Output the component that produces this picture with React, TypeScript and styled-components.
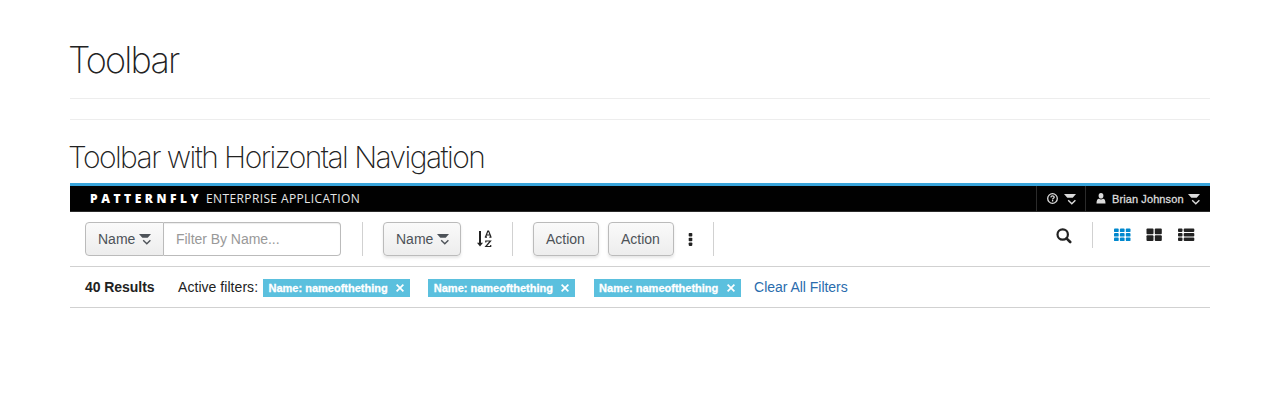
import React from 'react';
import styled, { createGlobalStyle } from 'styled-components';

const Global = createGlobalStyle`
  * { box-sizing: border-box; }
  body { margin: 0; background: #fff; }
`;

const Page = styled.main`
  width: 1140px;
  margin: 0 auto;
  height: 408px;
  font: 14px/20px "Liberation Sans", Arial, sans-serif;
  color: #222;
  white-space: nowrap;
`;
const Title = styled.h1`
  margin: 0 0 0 -2px;
  padding-top: 40px;
  height: 98px;
  font: 200 36px/40px Inter, sans-serif;
  letter-spacing: -1.85px;
  color: #222;
`;
const Rule = styled.hr`
  margin: 0 0 20px;
  border: 0;
  height: 1px;
  background: #ededed;
`;
const Subtitle = styled.h2`
  margin: 0 0 0 -2px;
  height: 43px;
  font: 200 30px/34px Inter, sans-serif;
  letter-spacing: -1.56px;
  color: #222;
`;
const Nav = styled.nav`
  display: flex;
  height: 29px;
  background: #010101;
  border-top: 3px solid #39a5dc;
  border-bottom: 1px solid #2b2b2b;
  color: #dbdbdb;
`;
const Brand = styled.div`
  flex: 1;
  display: flex;
  padding-left: 20px;
  font: 12px/26px "Open Sans", sans-serif;
  color: #fff;
`;
const BrandName = styled.span`
  width: 116px;
  font-weight: 800;
  letter-spacing: 3.55px;
`;
const BrandSuffix = styled.span`
  letter-spacing: 0.38px;
  color: #e6e6e6;
`;
const NavItem = styled.div<{ $width: number }>`
  display: flex;
  align-items: center;
  width: ${p => p.$width}px;
  padding: 0 9px 0 10px;
  border-left: 1px solid #2b2b2b;
  font-size: 11px;
  -webkit-text-stroke: 0.3px;
  svg { flex: none; }
`;
const HelpItem = styled(NavItem)`
  gap: 6px;
`;
const UserName = styled.span`
  width: 72px;
  margin-left: 6px;
  letter-spacing: 0.1px;
  margin-right: 4px;
`;
const Toolbar = styled.div`
  display: flex;
  align-items: flex-start;
  height: 55px;
  padding: 10px 15px 0;
  border-bottom: 1px solid #d1d1d1;
`;
const Button = styled.button<{ $width: number; $joined?: boolean }>`
  display: flex;
  align-items: center;
  flex: none;
  width: ${p => p.$width}px;
  height: 34px;
  padding: 0 0 0 12px;
  border: 1px solid #bbb;
  border-radius: ${p => (p.$joined ? '4px 0 0 4px' : '4px')};
  background: linear-gradient(#fafafa, #ededed);
  box-shadow: ${p => (p.$joined ? 'none' : '0 2px 3px rgba(3, 3, 3, 0.1)')};
  color: #4d5258;
  font: 14px/20px "Liberation Sans", Arial, sans-serif;
  svg { margin-left: 4px; }
`;
const FilterInput = styled.input`
  width: 177px;
  height: 34px;
  padding: 0 12px;
  border: 1px solid #bbb;
  border-left: 0;
  border-radius: 0 4px 4px 0;
  box-shadow: inset 0 1px 1px rgba(3, 3, 3, 0.075);
  font: 14px/20px "Liberation Sans", Arial, sans-serif;
  letter-spacing: -0.04px;
  &::placeholder { color: #999; opacity: 1; }
`;
const Divider = styled.i<{ $height?: number }>`
  flex: none;
  width: 1px;
  height: ${p => p.$height ?? 34}px;
  margin: 0 20px 0 21px;
  background: #d1d1d1;
`;
const SortIcon = styled.svg`
  margin: 8px -1px 0 16px;
  width: 15px;
  height: 18px;
`;
const Actions = styled.div`
  display: flex;
  gap: 9px;
`;
const Kebab = styled.svg`
  margin: 11px -1px 0 14px;
  width: 5px;
  height: 13px;
`;
const Views = styled.div`
  display: flex;
  margin-left: auto;
  > svg { margin: 6px -1px 0 0; }
`;
const ViewIcons = styled.div`
  display: flex;
  gap: 15px;
  padding: 6px 0 0 1px;
`;
const Results = styled.div`
  display: flex;
  height: 41px;
  padding: 12px 15px 0;
  line-height: 17px;
  border-bottom: 1px solid #d1d1d1;
`;
const Count = styled.strong`
  width: 93px;
  letter-spacing: -0.05px;
`;
const FilterCaption = styled.span`
  width: 85px;
  letter-spacing: 0.05px;
`;
const Chips = styled.div`
  display: flex;
  gap: 18.3px;
`;
const Chip = styled.span`
  display: flex;
  align-items: center;
  justify-content: space-between;
  width: 147px;
  height: 18px;
  padding: 1px 6px 0 5.5px;
  background: #5bc0de;
  color: #fff;
  font-size: 11px;
  font-weight: 700;
  -webkit-text-stroke: 0.3px #fff;
  svg { margin-top: -2px; }
`;
const Clear = styled.a`
  margin-left: 13.5px;
  letter-spacing: -0.03px;
  color: #2a6cad;
`;

const Caret = () => (
  <svg width="12" height="12" viewBox="0 0 12 12" fill="currentColor">
    <path d="M0 1h12L8.7 4.8H3.3z" />
    <path d="M4.2 7.2l3.6 3.5 3.6-3.5" fill="none" stroke="currentColor" strokeWidth="1.4" />
  </svg>
);
const Help = () => (
  <svg width="11" height="11" viewBox="0 0 11 11" fill="none" stroke="currentColor">
    <circle cx="5.5" cy="5.5" r="4.8" strokeWidth="1.3" />
    <path d="M3.8 4.3c.2-1 .8-1.4 1.7-1.4 1 0 1.7.5 1.7 1.3 0 1.1-1.6 1-1.6 2.2M5.6 7.1v1.3" strokeWidth="1.3" />
  </svg>
);
const User = () => (
  <svg width="10" height="11" viewBox="0 0 10 11" fill="currentColor">
    <ellipse cx="5" cy="2.8" rx="2.4" ry="2.8" />
    <path d="M.5 10.5c0-3 .8-4.7 2.5-4.7 1.2.8 2.8.8 4 0 1.7 0 2.5 1.7 2.5 4.7z" />
  </svg>
);
const Close = () => (
  <svg width="8" height="8" viewBox="0 0 8 8" fill="none" stroke="#fff" strokeWidth="1.7">
    <path d="M.6.6l6.8 6.8M7.4.6L.6 7.4" />
  </svg>
);
const Search = () => (
  <svg width="16" height="16" viewBox="0 0 16 16" fill="none" stroke="#222">
    <circle cx="6.7" cy="6.5" r="5.2" strokeWidth="2.2" />
    <path d="M10.5 10.3l3.7 3.7" strokeWidth="2.6" strokeLinecap="round" />
  </svg>
);

type Cell = [x: number, width: number];
const Grid = ({ columns, rows, cellHeight, color = '#222' }: {
  columns: Cell[]; rows: number[]; cellHeight: number; color?: string;
}) => (
  <svg width="17" height="14" fill={color}>
    {rows.map(y => columns.map(([x, width]) => (
      <rect key={`${x}-${y}`} x={x} y={y} width={width} height={cellHeight} rx="0.9" />
    )))}
  </svg>
);

const filters = ['nameofthething', 'nameofthething', 'nameofthething'];

export default function App() {
  return (
    <>
      <Global />
      <Page>
        <Title>Toolbar</Title>
        <Rule />
        <Rule />
        <Subtitle>Toolbar with Horizontal Navigation</Subtitle>
        <Nav>
          <Brand>
            <BrandName>PATTERNFLY</BrandName>
            <BrandSuffix>ENTERPRISE APPLICATION</BrandSuffix>
          </Brand>
          <HelpItem $width={49}><Help /><Caret /></HelpItem>
          <NavItem $width={125}><User /><UserName>Brian Johnson</UserName><Caret /></NavItem>
        </Nav>
        <Toolbar>
          <Button $width={79} $joined>Name<Caret /></Button>
          <FilterInput placeholder="Filter By Name..." />
          <Divider />
          <Button $width={78}>Name<Caret /></Button>
          <SortIcon viewBox="0 0 15 18" fill="none" stroke="#222">
            <path d="M3 1v13" strokeWidth="2" />
            <path d="M0 12.8h6L3 16.5z" fill="#222" stroke="none" />
            <path d="M8.5 7l2.3-6h.8L14 7M9.5 5h3.5M7.8 7.2h2.2M12.3 7.2h2.2M8.8 12.5V11h4.7L8.800 16.5h4.9V15" strokeWidth="1.2" />
          </SortIcon>
          <Divider />
          <Actions>
            <Button $width={66}>Action</Button>
            <Button $width={66}>Action</Button>
          </Actions>
          <Kebab fill="#222">
            {[0, 4.7, 9.4].map(y => <rect key={y} x="0.7" y={y} width="3.6" height="3.5" rx="0.8" />)}
          </Kebab>
          <Divider />
          <Views>
            <Search />
            <Divider $height={26} />
            <ViewIcons>
              <Grid columns={[[0, 4.7], [5.9, 4.7], [11.8, 4.7]]} rows={[0.5, 5, 9.5]} cellHeight={3.6} color="#0088ce" />
              <Grid columns={[[0.5, 7], [8.8, 7]]} rows={[0.5, 7.3]} cellHeight={5.7} />
              <Grid columns={[[0, 4.5], [5.7, 10.6]]} rows={[0.5, 5, 9.5]} cellHeight={3.4} />
            </ViewIcons>
          </Views>
        </Toolbar>
        <Results>
          <Count>40 Results</Count>
          <FilterCaption>Active filters:</FilterCaption>
          <Chips>
            {filters.map((value, i) => <Chip key={i}>Name: {value}<Close /></Chip>)}
          </Chips>
          <Clear>Clear All Filters</Clear>
        </Results>
      </Page>
    </>
  );
}
